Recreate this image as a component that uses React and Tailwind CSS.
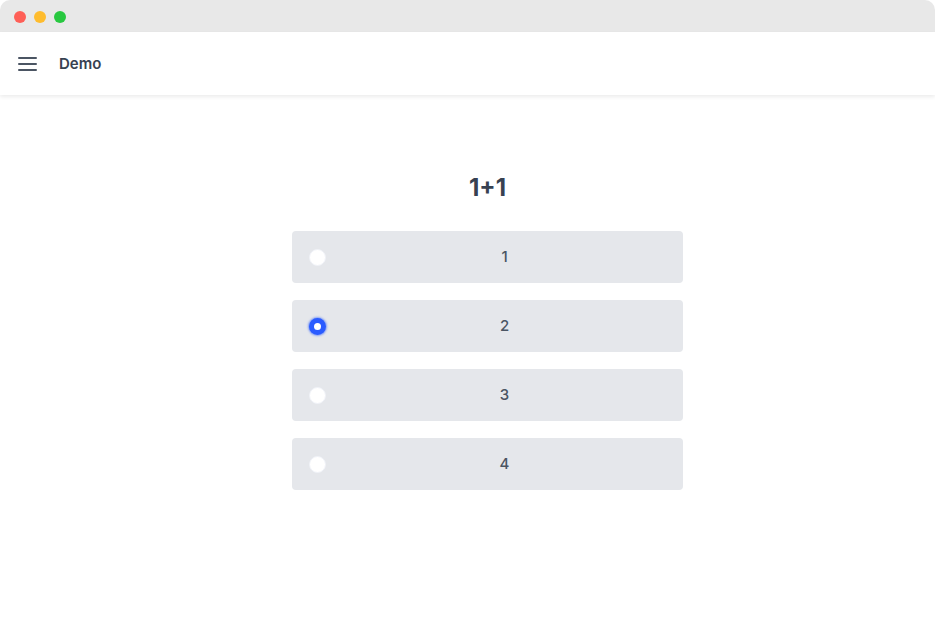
import React, { useState } from "react";

export default function App() {
  const [sel, setSel] = useState(2);
  const opts = [1, 2, 3, 4];
  return (
    <div className="w-[935px] h-[636px] bg-white overflow-hidden rounded-[10px] flex flex-col" style={{ fontFamily: "Inter, 'Noto Sans', sans-serif" }}>
      <div className="h-[32px] bg-[#e8e8e8] flex items-start pt-[11px] gap-[8px] pl-[14px] shrink-0">
        <span className="w-[12px] h-[12px] rounded-full bg-[#fe5f57]" />
        <span className="w-[12px] h-[12px] rounded-full bg-[#febc2e]" />
        <span className="w-[12px] h-[12px] rounded-full bg-[#28c840]" />
      </div>
      <header className="h-[63px] bg-white flex items-center pl-[18px] pt-[1px] shadow-[0_2px_4px_rgba(0,0,0,0.08)] z-10 shrink-0">
        <svg width="20" height="14" viewBox="0 0 20 14" className="text-[#4b5563]">
          <rect x="0" y="0" width="19" height="2" rx="1" fill="currentColor" />
          <rect x="0" y="6" width="19" height="2" rx="1" fill="currentColor" />
          <rect x="0" y="12" width="19" height="2" rx="1" fill="currentColor" />
        </svg>
        <span className="ml-[21px] text-[15px] font-semibold text-[#374151]">Demo</span>
      </header>
      <main className="flex-1 flex flex-col items-center pt-[77px] pl-[40px]">
        <h1 className="text-[24px] font-bold text-[#374151] leading-[32px]">1+1</h1>
        <div className="mt-[27px] flex flex-col gap-[17px] w-[391px]">
          {opts.map((o) => (
            <label key={o} onClick={() => setSel(o)} className="h-[52px] bg-[#e5e7eb] rounded-[4px] flex items-center pl-[16px] pr-[16px] cursor-pointer">
              <span className="w-[18px] h-[18px] flex items-center justify-center">
                {sel === o ? (
                  <span className="w-[17px] h-[17px] rounded-full bg-[#2a5bff] flex items-center justify-center shadow-[0_0_2px_1px_rgba(42,91,255,0.55)]">
                    <span className="w-[7px] h-[7px] rounded-full bg-white" />
                  </span>
                ) : (
                  <span className="w-[17px] h-[17px] rounded-full bg-white border border-[#f0f2f8]" />
                )}
              </span>
              <span className="flex-1 text-center ml-[16px] text-[15px] font-medium text-[#4b5563]">{o}</span>
            </label>
          ))}
        </div>
      </main>
    </div>
  );
}
